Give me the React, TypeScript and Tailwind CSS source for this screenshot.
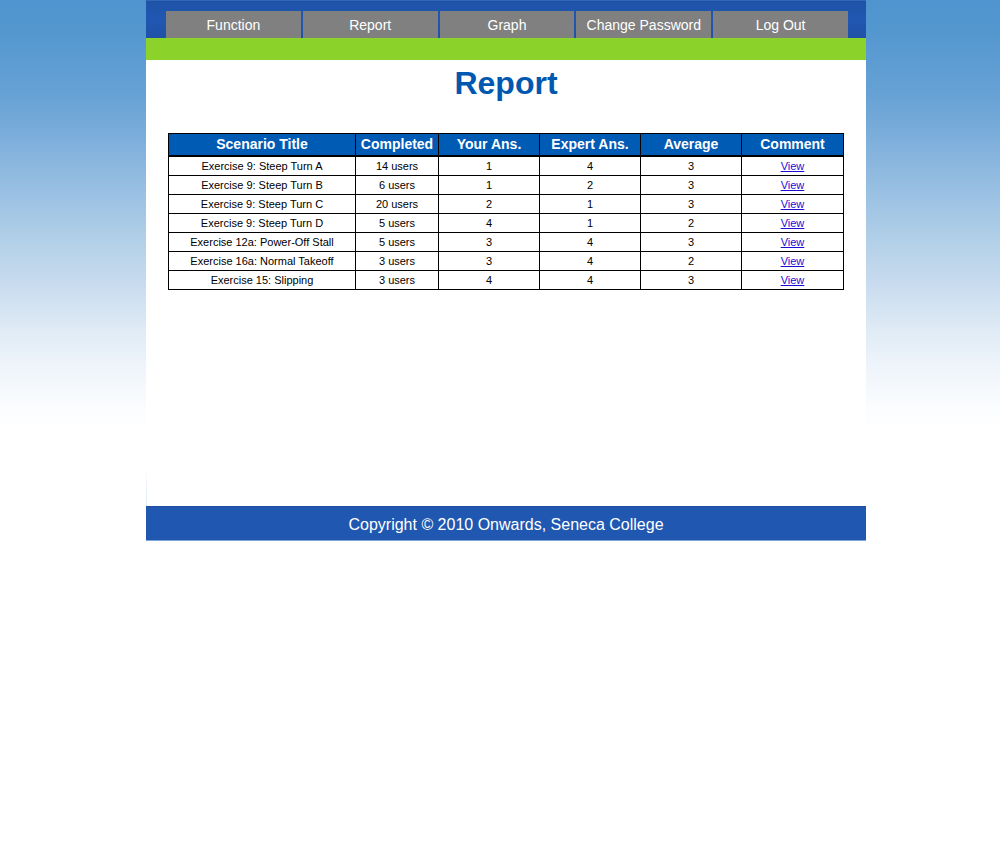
const navItems = ["Function", "Report", "Graph", "Change Password", "Log Out"];

const columns = [
  { label: "Scenario Title", width: "w-[187px]" },
  { label: "Completed", width: "w-[83px]" },
  { label: "Your Ans.", width: "w-[101px]" },
  { label: "Expert Ans.", width: "w-[101px]" },
  { label: "Average", width: "w-[101px]" },
  { label: "Comment", width: "w-[102px]" },
];

const rows = [
  { title: "Exercise 9: Steep Turn A", users: 14, yours: 1, expert: 4, average: 3 },
  { title: "Exercise 9: Steep Turn B", users: 6, yours: 1, expert: 2, average: 3 },
  { title: "Exercise 9: Steep Turn C", users: 20, yours: 2, expert: 1, average: 3 },
  { title: "Exercise 9: Steep Turn D", users: 5, yours: 4, expert: 1, average: 2 },
  { title: "Exercise 12a: Power-Off Stall", users: 5, yours: 3, expert: 4, average: 3 },
  { title: "Exercise 16a: Normal Takeoff", users: 3, yours: 3, expert: 4, average: 2 },
  { title: "Exercise 15: Slipping", users: 3, yours: 4, expert: 4, average: 3 },
];

function Header() {
  return (
    <header>
      <div className="border-t border-[#3068b8] bg-linear-to-b from-[#1f53a7] via-[#2157b2] to-[#1f52a6] pt-[10px] pr-[18px] pl-5">
        <nav className="grid grid-cols-5 gap-[2px]">
          {navItems.map((item) => (
            <a
              key={item}
              href="#"
              className="bg-[#808080] pt-px text-center text-[14px] leading-[26px] whitespace-nowrap text-white"
            >
              {item}
            </a>
          ))}
        </nav>
      </div>
      <div className="h-[22px] bg-[#8bd22b]" />
    </header>
  );
}

function ReportTable() {
  return (
    <table className="w-full table-fixed border-collapse text-center text-black">
      <thead>
        <tr className="border-b-2 border-black bg-[#005bb5] text-[14px] leading-[21px] text-white">
          {columns.map((column) => (
            <th
              key={column.label}
              scope="col"
              className={`${column.width} border-x border-t border-black p-0 font-bold whitespace-nowrap`}
            >
              {column.label}
            </th>
          ))}
        </tr>
      </thead>
      <tbody className="text-[11px] leading-[18px]">
        {rows.map((row) => (
          <tr key={row.title}>
            <td className="border border-black p-0">{row.title}</td>
            <td className="border border-black p-0">{row.users} users</td>
            <td className="border border-black p-0">{row.yours}</td>
            <td className="border border-black p-0">{row.expert}</td>
            <td className="border border-black p-0">{row.average}</td>
            <td className="border border-black p-0">
              <a href="#" className="text-[#1c0cd6] underline">
                View
              </a>
            </td>
          </tr>
        ))}
      </tbody>
    </table>
  );
}

export default function App() {
  return (
    <div className="min-h-screen bg-white bg-[linear-gradient(to_bottom,#4f94cf_0px,#5397cf_30px,#67a2d5_96px,#76aad9_125px,#9bc1e3_195px,#b4d1e8_245px,#c6daee_280px,#dfebf5_330px,#f0f5fb_370px,#fafcfe_405px,#ffffff_432px)] pl-3 font-['Liberation_Sans',Arial,sans-serif]">
      <div className="mx-auto flex max-w-[720px] flex-col bg-white">
        <Header />
        <main className="min-h-[446px] bg-[linear-gradient(to_bottom,#ffffff,#dfe9f6)] bg-[length:1px_40px] bg-left-bottom bg-no-repeat px-[22px] pt-[3px]">
          <h1 className="mb-[30px] text-center text-[32px] leading-10 font-bold text-[#0058b0]">
            Report
          </h1>
          <ReportTable />
        </main>
        <footer className="border-t border-b border-t-[#1f4f9e] border-b-[#7fa4d8] bg-[#2057b1] pt-[2px] text-center text-[16px] leading-[31px] text-white">
          Copyright © 2010 Onwards, Seneca College
        </footer>
      </div>
    </div>
  );
}
